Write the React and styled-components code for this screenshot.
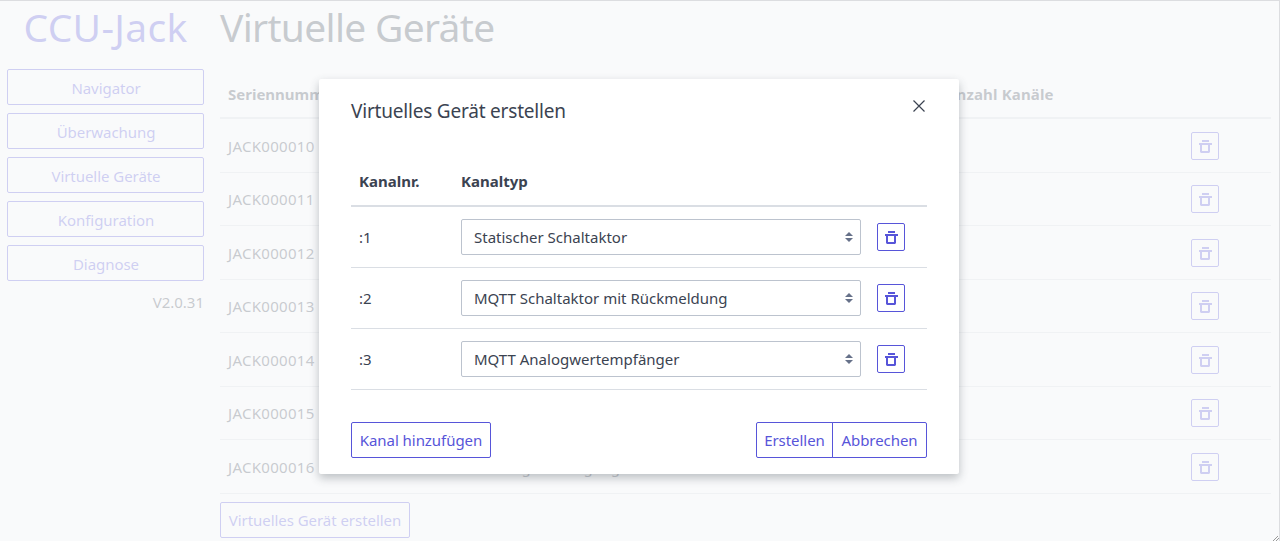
import React from 'react';
import styled, { createGlobalStyle } from 'styled-components';

const Global = createGlobalStyle`
  * { box-sizing: border-box; }
  body {
    margin: 0;
    overflow: hidden;
    background: #fff;
    color: #3b4351;
    font: 15px/20px "Segoe UI", "Noto Sans", sans-serif;
  }
  h1, h2, p { margin: 0; font-weight: 400; }
`;

const Page = styled.div`
  position: relative;
  display: flex;
  gap: 16px;
  width: 1280px;
  height: 541px;
  padding: 0 8px 0 7px;
  overflow: hidden;
`;

const Sidebar = styled.nav`
  width: 197px;
  display: flex;
  flex-direction: column;
  gap: 8px;
`;

const Main = styled.main`
  width: 1051px;
`;

const Title = styled.h1`
  flex: none;
  height: 61px;
  padding-top: 6px;
  font-size: 39px;
  line-height: 42px;
  letter-spacing: ${(p) => (p.$brand ? '0.3px' : '-0.7px')};
  white-space: nowrap;
  text-align: ${(p) => (p.$brand ? 'center' : 'left')};
  color: ${(p) => (p.$brand ? '#5755d9' : 'inherit')};
`;

const Button = styled.button`
  height: 36px;
  width: ${(p) => p.$width || 'auto'};
  flex: none;
  padding: 0;
  border: 1px solid #5755d9;
  border-radius: ${(p) => p.$radius || '2px'};
  margin-left: ${(p) => (p.$joined ? '-1px' : 0)};
  background: transparent;
  color: #5755d9;
  font: inherit;
  letter-spacing: -0.05px;
  white-space: nowrap;
`;

const NavButton = styled(Button)`
  padding: 2px 0 0 1px;
`;

const Version = styled.p`
  padding-top: 3px;
  text-align: right;
`;

const Row = styled.div`
  display: grid;
  align-items: center;
  grid-template-columns: ${(p) => p.$columns};
  height: ${(p) => p.$height};
  padding-top: ${(p) => p.$top || 0};
  border-bottom: ${(p) => (p.$head ? '2px' : '1px')} solid #dadee4;
  font-weight: ${(p) => (p.$head ? 700 : 400)};
`;

const Cell = styled.span`
  padding: ${(p) => p.$pad || '0 8px'};
  letter-spacing: ${(p) => p.$spacing || 0};
  white-space: nowrap;
`;

const Footer = styled.div`
  padding-top: 8px;
`;

const Overlay = styled.div`
  position: absolute;
  inset: 0;
  display: flex;
  align-items: flex-start;
  justify-content: center;
  padding: 79px 2px 0 0;
  background: rgba(247, 248, 250, 0.75);
`;

const Frame = styled.div`
  position: absolute;
  inset: 0;
  border: solid #dcdde0;
  border-width: 1px 1px 0 0;
`;

const Grip = styled.svg`
  position: absolute;
  right: 1px;
  bottom: 0;
`;

const Modal = styled.section`
  width: 640px;
  height: 395px;
  padding: 16px 32px;
  border-radius: 2px;
  background: #fff;
  box-shadow: 0 4px 10px rgba(48, 55, 66, 0.3);
`;

const ModalHeader = styled.header`
  display: flex;
  justify-content: space-between;
  height: 63px;
  padding-top: 3px;
`;

const ModalTitle = styled.h2`
  font-size: 19px;
  line-height: 26px;
  letter-spacing: -0.2px;
`;

const Close = styled.button`
  width: 16px;
  height: 16px;
  padding: 0;
  border: 0;
  background: none;
`;

const Select = styled.div`
  display: flex;
  align-items: center;
  justify-content: space-between;
  width: 400px;
  height: 36px;
  padding: 0 7px 0 12px;
  border: 1px solid #bcc3ce;
  border-radius: 2px;
`;

const DeleteButton = styled.button`
  display: flex;
  justify-content: center;
  align-items: flex-start;
  width: 28px;
  height: 28px;
  padding: 7px 0 0;
  border: 1px solid #5755d9;
  border-radius: 2px;
  background: none;
`;

const Actions = styled.div`
  display: flex;
  justify-content: space-between;
  padding-top: 32px;
`;

const Group = styled.div`
  display: flex;
`;

const Trash = () => (
  <DeleteButton aria-label="Löschen">
    <svg width="14" height="14" viewBox="0 0 14 14" fill="#5755d9">
      <path d="M4 0h7v2H4zM1 3h13v2H1zM2 5h2v6h6V5h2v7l-1 1H3l-1-1z" />
    </svg>
  </DeleteButton>
);

const nav = ['Navigator', 'Überwachung', 'Virtuelle Geräte', 'Konfiguration', 'Diagnose'];
const devices = [
  ['JACK000010'],
  ['JACK000011'],
  ['JACK000012'],
  ['JACK000013'],
  ['JACK000014'],
  ['JACK000015'],
  ['JACK000016', 'Klingel Bewegung'],
];
const channels = [
  ['1', 'Statischer Schaltaktor'],
  ['2', 'MQTT Schaltaktor mit Rückmeldung'],
  ['3', 'MQTT Analogwertempfänger'],
];

const deviceColumns = '268px 450px 253px 1fr';
const channelColumns = '102px 424px 1fr';

export default function App() {
  return (
    <>
      <Global />
      <Page>
        <Sidebar>
          <Title $brand>CCU-Jack</Title>
          {nav.map((label) => (
            <NavButton key={label}>{label}</NavButton>
          ))}
          <Version>V2.0.31</Version>
        </Sidebar>
        <Main>
          <Title>Virtuelle Geräte</Title>
          <Row $columns={deviceColumns} $height="58px" $head>
            <Cell $pad="9px 8px 0">Seriennummer</Cell>
            <Cell />
            <Cell $pad="9px 8px 0" $spacing="0.15px">Anzahl Kanäle</Cell>
          </Row>
          {devices.map(([serial, name]) => (
            <Row key={serial} $columns={deviceColumns} $height="53.5px" $top="1px">
              <Cell $spacing="0.3px">{serial}</Cell>
              <Cell $spacing="-0.2px">{name}</Cell>
              <Cell />
              <Trash />
            </Row>
          ))}
          <Footer>
            <Button $width="190px">Virtuelles Gerät erstellen</Button>
          </Footer>
        </Main>
        <Overlay>
          <Modal>
            <ModalHeader>
              <ModalTitle>Virtuelles Gerät erstellen</ModalTitle>
              <Close aria-label="Schließen">
                <svg width="16" height="16" viewBox="0 0 16 16" stroke="#3b4351" strokeWidth="1.2">
                  <path d="M2.5 2.5l11 11M13.5 2.5l-11 11" />
                </svg>
              </Close>
            </ModalHeader>
            <Row $columns={channelColumns} $height="49px" $head>
              <Cell $pad="0 8px 2px">Kanalnr.</Cell>
              <Cell $pad="0 8px 2px">Kanaltyp</Cell>
            </Row>
            {channels.map(([n, type]) => (
              <Row key={n} $columns={channelColumns} $height="61px">
                <Cell>:{n}</Cell>
                <Cell>
                  <Select>
                    <Cell $pad="0">{type}</Cell>
                    <svg width="8" height="10" viewBox="0 0 8 10" fill="#667189">
                      <path d="M4 0l4 4H0zM0 6h8L4 10z" />
                    </svg>
                  </Select>
                </Cell>
                <Trash />
              </Row>
            ))}
            <Actions>
              <Button $width="140px">Kanal hinzufügen</Button>
              <Group>
                <Button $width="77px" $radius="2px 0 0 2px">Erstellen</Button>
                <Button $width="95px" $radius="0 2px 2px 0" $joined>Abbrechen</Button>
              </Group>
            </Actions>
          </Modal>
        </Overlay>
        <Frame />
        <Grip width="6" height="5" viewBox="0 0 6 5" stroke="#999" fill="none">
          <path d="M0 5L5 0M3 5l3-3" />
        </Grip>
      </Page>
    </>
  );
}
